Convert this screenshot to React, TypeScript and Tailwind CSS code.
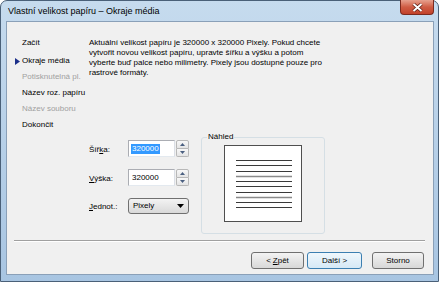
import React from 'react';

const NAV = [
  { label: 'Začít', active: false, enabled: true },
  { label: 'Okraje média', active: true, enabled: true },
  { label: 'Potisknutelná pl.', active: false, enabled: false },
  { label: 'Název roz. papíru', active: false, enabled: true },
  { label: 'Název souboru', active: false, enabled: false },
  { label: 'Dokončit', active: false, enabled: true },
];

const Spinner = () => (
  <div className="flex flex-col w-[13px] h-[17px] ml-[1px]">
    <div className="flex-1 flex items-center justify-center border border-[#b8b8b8] rounded-t-[2px] bg-linear-to-b from-[#f8f8f8] to-[#e4e4e4]">
      <svg width="5" height="3" viewBox="0 0 5 3"><path d="M0 3 L2.5 0 L5 3 Z" fill="#4a5f80" /></svg>
    </div>
    <div className="flex-1 flex items-center justify-center border border-t-0 border-[#b8b8b8] rounded-b-[2px] bg-linear-to-b from-[#f8f8f8] to-[#e4e4e4]">
      <svg width="5" height="3" viewBox="0 0 5 3"><path d="M0 0 L2.5 3 L5 0 Z" fill="#4a5f80" /></svg>
    </div>
  </div>
);

const Button = ({ children, primary, width }: { children: React.ReactNode; primary?: boolean; width: string }) => (
  <div
    className={`${width} h-[17px] flex items-center justify-center rounded-[3px] border ${
      primary ? 'border-[#3c7fb1] bg-linear-to-b from-[#f0f7fc] to-[#d6e9f6]' : 'border-[#707070] bg-linear-to-b from-[#f3f3f3] to-[#d8d8d8]'
    }`}
  >
    {children}
  </div>
);

export default function App() {
  return (
    <div
      className="w-[439px] h-[282px] flex flex-col border border-[#4a6078] rounded-t-[7px] bg-linear-to-b from-[#c6dbee] via-[#b7d0e8] to-[#a8c5e2] text-[8px] leading-[10px] text-black"
      style={{ fontFamily: '"Liberation Sans", Arial, sans-serif' }}
    >
      {/* title bar */}
      <div className="h-[20px] flex justify-between">
        <div className="pl-[7px] pt-[5px] text-[9px] leading-[11px]">Vlastní velikost papíru – Okraje média</div>
        <div className="w-[34px] h-[15px] mr-[4px] -mt-[1px] flex items-center justify-center rounded-b-[4px] border border-t-0 border-[#7b2a1e] bg-linear-to-b from-[#e6a08e] via-[#cf5c44] to-[#c2412a]">
          <svg width="11" height="9" viewBox="0 0 11 9">
            <path d="M1.5 1 L9.5 8 M9.5 1 L1.5 8" stroke="#5a1c14" strokeWidth="3.4" />
            <path d="M1.5 1 L9.5 8 M9.5 1 L1.5 8" stroke="#ffffff" strokeWidth="2" />
          </svg>
        </div>
      </div>

      {/* client area */}
      <div className="ml-[5px] mr-[4px] mb-[6px] flex-1 flex flex-col border border-[#8aa0b8] bg-[#f0f0f0]">
        <div className="h-[218px] flex pt-[13px]">
          <div className="w-[82px] pl-[8px] flex flex-col">
            {NAV.map((n, i) => (
              <div key={n.label} className={`h-[16px] flex items-center ${i === 0 ? 'mb-[2px]' : ''}`}>
                <span className="w-[7px] flex items-center">
                  {n.active && (
                    <svg width="5" height="7" viewBox="0 0 5 7"><path d="M0 0 L5 3.5 L0 7 Z" fill="#1c2f8a" /></svg>
                  )}
                </span>
                <span className={`whitespace-nowrap ${n.enabled ? 'text-black' : 'text-[#a0a0a0]'}`}>{n.label}</span>
              </div>
            ))}
          </div>

          <div className="flex-1 pt-[3px]">
            <p>
              Aktuální velikost papíru je 320000 x 320000 Pixely. Pokud chcete
              <br />
              vytvořit novou velikost papíru, upravte šířku a výšku a potom
              <br />
              vyberte buď palce nebo milimetry. Pixely jsou dostupné pouze pro
              <br />
              rastrové formáty.
            </p>

            <div className="mt-[51px] flex items-start">
              <div className="w-[100px] mt-[11px] flex flex-col gap-[12px]">
                <div className="flex items-center h-[17px]">
                  <span className="w-[39px] pt-[2px]">Šíř<span className="underline">k</span>a:</span>
                  <div className="w-[47px] h-[17px] flex items-center pl-[2px] bg-white border border-[#abadb3] border-b-[#e3e9ef] border-r-[#dbdfe6]">
                    <span className="bg-[#3399ff] text-white px-px">320000</span>
                  </div>
                  <Spinner />
                </div>
                <div className="flex items-center h-[17px]">
                  <span className="w-[39px] pt-[2px]"><span className="underline">V</span>ýška:</span>
                  <div className="w-[47px] h-[17px] flex items-center pl-[3px] bg-white border border-[#abadb3] border-b-[#e3e9ef] border-r-[#dbdfe6]">
                    320000
                  </div>
                  <Spinner />
                </div>
                <div className="flex items-center h-[16px]">
                  <span className="w-[39px] pt-[2px]"><span className="underline">J</span>ednot.:</span>
                  <div className="w-[61px] h-[16px] flex items-center justify-between pl-[4px] pr-[4px] rounded-[3px] border border-[#707070] bg-linear-to-b from-[#f3f3f3] to-[#d9d9d9]">
                    <span>Pixely</span>
                    <svg width="7" height="4" viewBox="0 0 7 4"><path d="M0 0 L7 0 L3.5 4 Z" fill="#000" /></svg>
                  </div>
                </div>
              </div>

              <fieldset className="ml-[12px] mt-[3px] w-[124px] h-[102px] border border-[#d5dfe5] rounded-[3px] pl-[5px]">
                <legend className="px-[1px] leading-[10px]">Náhled</legend>
                <div className="flex justify-center -ml-[5px] mt-[3px]">
                  <div className="w-[78px] h-[77px] border border-[#4f4f4f] bg-white">
                    <svg width="76" height="75" viewBox="0 0 76 75">
                      {Array.from({ length: 10 }).map((_, i) => {
                        const y = 14.5 + Math.round(i * 5.25);
                        const gray = i === 3 || i === 7;
                        return (
                          <line key={i} x1="11" x2="67" y1={y} y2={y} stroke={gray ? '#8a8a8a' : '#3a3a3a'} strokeWidth={gray ? 1.4 : 1} />
                        );
                      })}
                    </svg>
                  </div>
                </div>
              </fieldset>
            </div>
          </div>
        </div>

        {/* separator */}
        <div className="ml-[7px] mr-[8px] h-[2px] border-t border-[#a0a0a0] border-b border-b-white" />

        <div className="flex justify-end pt-[10px] pr-[9px]">
          <Button width="w-[53px]">
            &lt; <span className="underline ml-[2px]">Z</span>pět
          </Button>
          <div className="w-[3px]" />
          <Button width="w-[55px]" primary>
            Další &gt;
          </Button>
          <div className="w-[10px]" />
          <Button width="w-[52px]">Storno</Button>
        </div>
      </div>
    </div>
  );
}
